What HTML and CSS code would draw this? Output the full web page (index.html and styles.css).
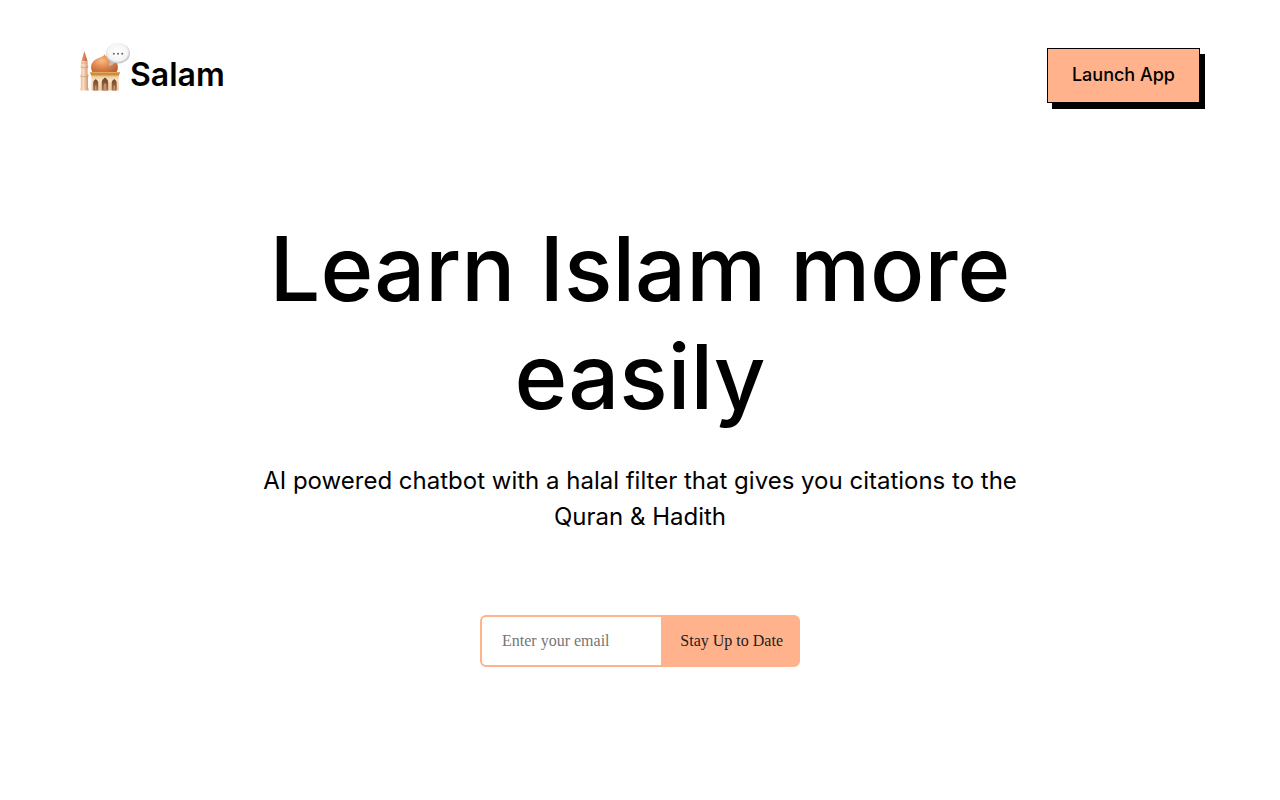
FILE: index.html
```html
<!DOCTYPE html>
<html lang="en">
<head>
<meta charset="utf-8">
<meta name="viewport" content="width=device-width, initial-scale=1">
<title>Salam</title>
<link rel="stylesheet" href="styles.css">
</head>
<body>
<header class="header">
  <a class="brand" href="#">
    <svg class="logo" viewBox="0 0 50 50" aria-hidden="true">
      <defs>
        <linearGradient id="tower"><stop offset="0" stop-color="#eeb58c"/><stop offset=".35" stop-color="#fbdfc4"/><stop offset="1" stop-color="#cf9068"/></linearGradient>
        <linearGradient id="spire"><stop offset="0" stop-color="#ee9c70"/><stop offset="1" stop-color="#bd6440"/></linearGradient>
        <radialGradient id="dome" cx=".4" cy=".35" r=".75"><stop offset="0" stop-color="#f9bb86"/><stop offset=".45" stop-color="#e38a50"/><stop offset="1" stop-color="#b65c35"/></radialGradient>
        <linearGradient id="wall" x2="0" y2="1"><stop offset="0" stop-color="#e8bd88"/><stop offset=".3" stop-color="#fae0bd"/><stop offset="1" stop-color="#efc8a3"/></linearGradient>
        <linearGradient id="arch" x2="0" y2="1"><stop offset="0" stop-color="#6b4026"/><stop offset="1" stop-color="#a37650"/></linearGradient>
        <radialGradient id="bubble" cx=".48" cy=".45" r=".56"><stop offset="0" stop-color="#fff"/><stop offset=".75" stop-color="#f4f4f5"/><stop offset="1" stop-color="#b4b4b8"/></radialGradient>
      </defs>
      <path fill="url(#spire)" d="M4.4 9 7.5 19H1.500Z"/>
      <path fill="url(#tower)" d="M1.200 19h6.400v4.500h.6v2h-.6v7h.8v2h-.4V46.500h.6v2H.5v-2H.8V34.500H.4v-2h.8v-7H.7v-2h.5Z"/>
      <path stroke="#c98d66" stroke-width=".6" d="M1.200 21h6.200M1.200 25.600h6.500M.8 34.600h7.400"/>
      <path fill="url(#dome)" d="M24.500 12c.5 2.200 2.500 2.800 6 4 8 3 9 10 5.500 15H13c-3.500-5-2.500-12 5.500-15 3.500-1.200 5.500-1.800 6-4Z"/>
      <path fill="url(#wall)" d="M11.300 33h27.500v15.500H11.300Z"/>
      <path fill="#cc8e3c" d="M10 30h30l-1 3.500H11Z"/>
      <path stroke="#edbb70" stroke-width=".7" d="M10.500 30.400h29"/>
      <path fill="url(#arch)" d="M13.200 48.500v-8q0-1.700 2.500-3.500 2.500 1.800 2.500 3.500v8ZM21.800 48.500v-8.500q0-2.200 3.200-4.500 3.200 2.300 3.200 4.500v8.500ZM31.700 48.500v-8q0-1.700 2.500-3.500 2.500 1.800 2.500 3.500v8Z"/>
      <path fill="#c0946a" d="M23.700 48.500v-6l1.300-1.500 1.300 1.500v6ZM15 48.500v-5h1.500v5ZM33.500 48.500v-5H35v5Z"/>
      <path fill="#bcbcc0" d="m30 17.500-1 6.500q4-.7 6.500-4Z"/>
      <ellipse cx="38" cy="11.300" rx="12" ry="10.300" fill="url(#bubble)"/>
      <g fill="#66666b"><circle cx="33.800" cy="11.800" r="1"/><circle cx="38" cy="11.800" r="1"/><circle cx="42.200" cy="11.800" r="1"/></g>
    </svg>
    <span class="brand-name">Salam</span>
  </a>
  <button class="launch" type="button">Launch App</button>
</header>
<main class="hero">
  <h1 class="title">Learn Islam more easily</h1>
  <p class="subtitle">AI powered chatbot with a halal filter that gives you citations to the Quran &amp; Hadith</p>
  <form class="signup">
    <input class="email" type="email" placeholder="Enter your email" aria-label="Email address">
    <button class="submit" type="submit">Stay Up to Date</button>
  </form>
</main>
</body>
</html>
```
FILE: styles.css
```css
* {
  box-sizing: border-box;
}

body {
  margin: 0;
  background: #fff;
  color: #000;
  font-family: Inter, sans-serif;
}

.header {
  display: flex;
  justify-content: space-between;
  align-items: flex-start;
  padding: 42px 80px 0;
}

.brand {
  display: flex;
  align-items: flex-start;
  color: inherit;
  text-decoration: none;
}

.logo {
  width: 50px;
  height: 50px;
}

.brand-name {
  margin-top: 13px;
  font-size: 32px;
  font-weight: 600;
  line-height: 40px;
}

.launch {
  margin-top: 6px;
  padding: 12px 24px 14px;
  border: 1px solid #000;
  background: #ffb28c;
  box-shadow: 5px 6px 0 #000;
  color: #000;
  font: 500 18px/27px Inter, sans-serif;
}

.hero {
  display: flex;
  flex-direction: column;
  align-items: center;
  max-width: 800px;
  margin: 0 auto;
  padding: 112px 16px 48px;
  text-align: center;
}

.title {
  margin: 0;
  font-size: 90px;
  font-weight: 500;
  line-height: 108px;
}

.subtitle {
  margin: 32px 0 0;
  font-size: 24px;
  line-height: 36px;
}

.signup {
  display: flex;
  width: 320px;
  max-width: 100%;
  margin-top: 80px;
  border: 2px solid #ffb28c;
  border-radius: 6px;
  background: #ffb28c;
}

.email,
.submit {
  height: 48px;
  border: 0;
  font: 16px "Liberation Serif", serif;
}

.email {
  flex: 1;
  min-width: 0;
  padding: 0 20px;
  border-radius: 4px 0 0 4px;
  background: #fff;
}

.email::placeholder {
  color: #757575;
}

.submit {
  padding: 0 15px 0 19px;
  background: transparent;
  color: #212121;
}
```
